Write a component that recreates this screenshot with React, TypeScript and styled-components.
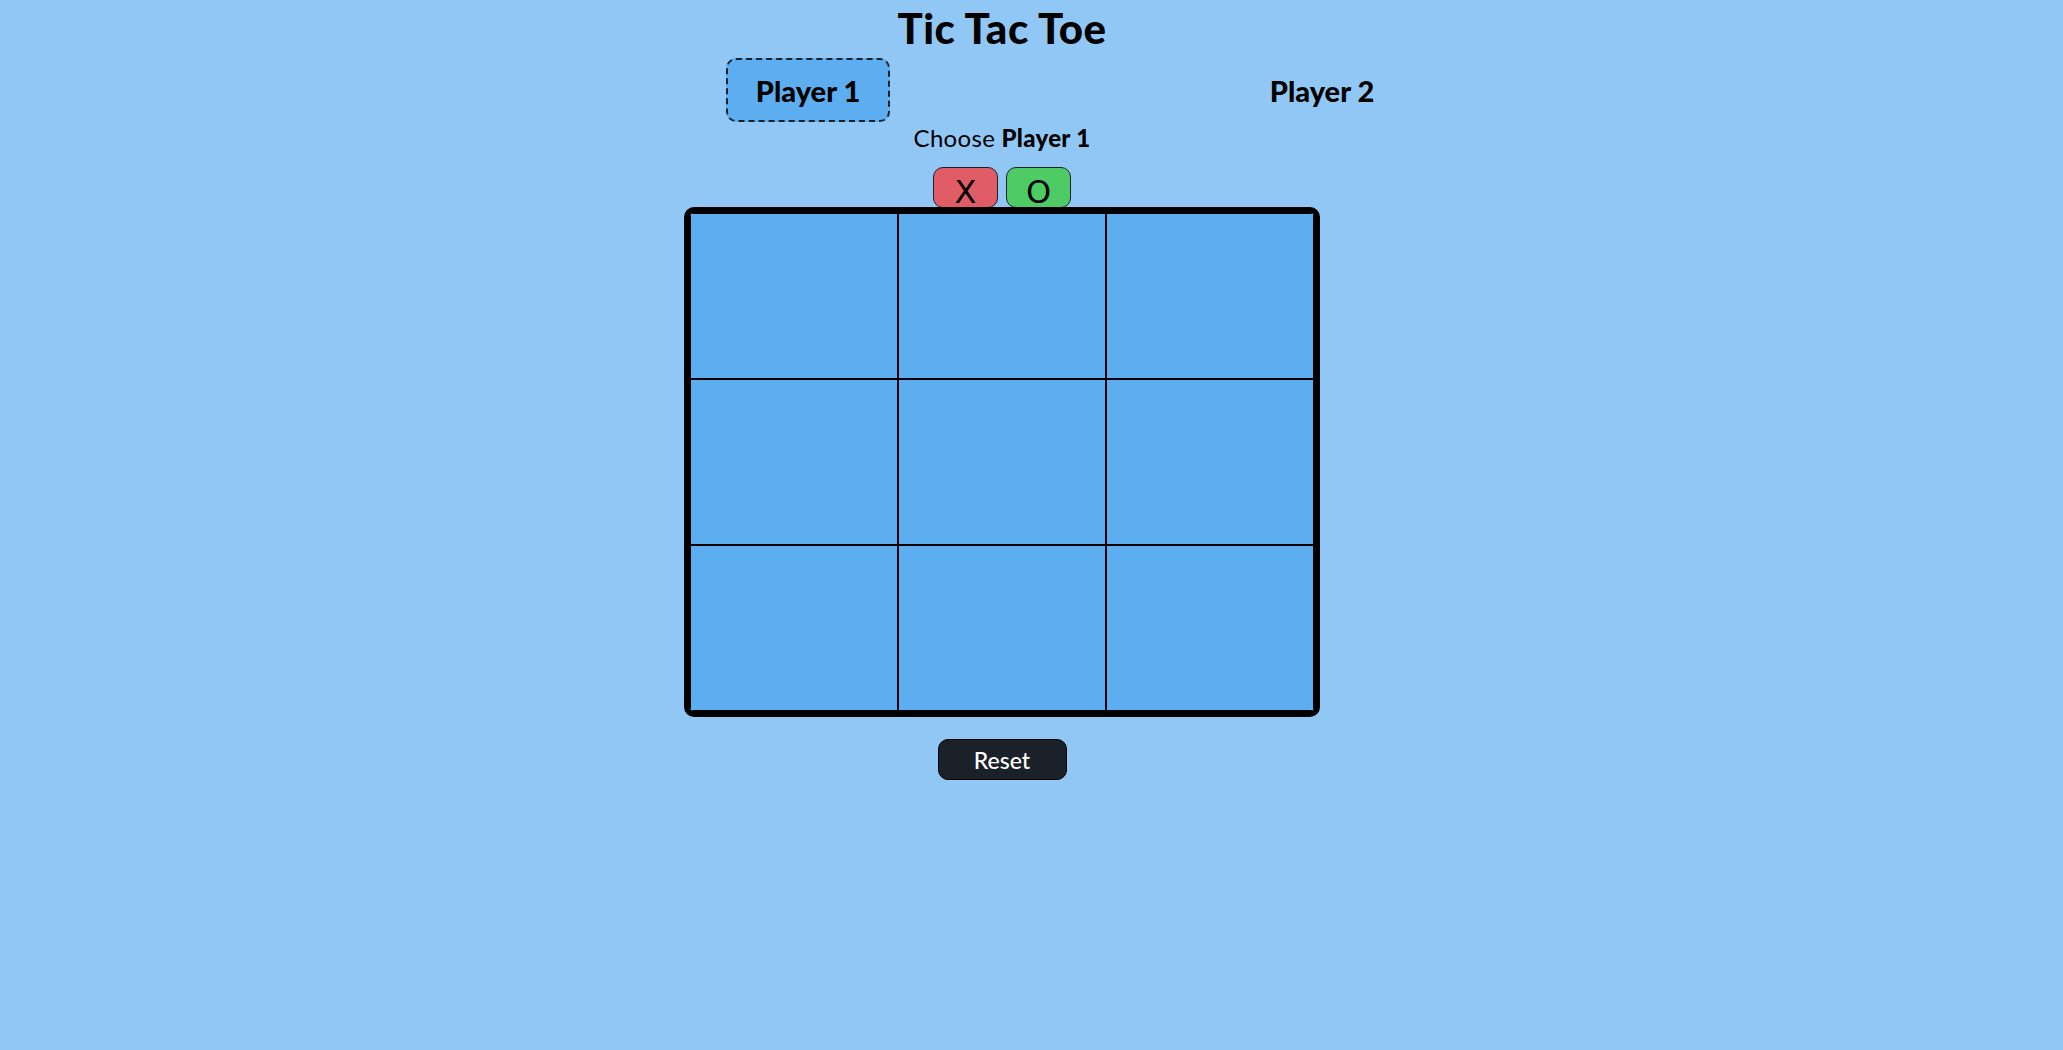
import React, { useState } from "react";
import styled, { createGlobalStyle } from "styled-components";

const GlobalStyle = createGlobalStyle`
  html, body {
    margin: 0;
    padding: 0;
    background: #91c7f5;
    font-family: "Lato", "Open Sans", sans-serif;
    color: #000;
  }
`;

const Page = styled.main`
  display: flex;
  flex-direction: column;
  align-items: center;
  width: calc(100% - 59px);
  min-height: 1050px;
  box-sizing: border-box;
`;

const Title = styled.h1`
  margin: 5px 0 0;
  font-size: 42px;
  line-height: 47px;
  font-weight: 900;
  letter-spacing: 0.5px;
`;

const PlayersRow = styled.div`
  display: flex;
  justify-content: space-between;
  align-items: center;
  width: 678px;
  margin: 6px 0 0 126px;
`;

const PlayerTag = styled.div<{ $active?: boolean }>`
  width: 164px;
  height: 64px;
  box-sizing: border-box;
  display: flex;
  align-items: center;
  justify-content: center;
  font-size: 29px;
  font-weight: 900;
  border-radius: 10px;
  border: 2px dashed ${(p) => (p.$active ? "#1b2129" : "transparent")};
  background: ${(p) => (p.$active ? "#5daef0" : "transparent")};
`;

const Prompt = styled.p`
  margin: 1px 0 0;
  font-size: 24px;
  line-height: 30px;
  font-weight: 400;
  letter-spacing: 0.3px;

  strong {
    font-weight: 900;
  }
`;

const ChoiceRow = styled.div`
  display: flex;
  gap: 8px;
  margin-top: 14px;
`;

const ChoiceButton = styled.button<{ $color: string }>`
  width: 65px;
  height: 41px;
  box-sizing: border-box;
  border: 1.5px solid #1b2129;
  border-radius: 10px;
  background: ${(p) => p.$color};
  color: #000;
  font-family: "DejaVu Sans", sans-serif;
  font-size: 32px;
  line-height: 1;
  padding: 8px 0 0;
  cursor: pointer;
  display: flex;
  align-items: center;
  justify-content: center;
`;

const Board = styled.div`
  display: grid;
  grid-template-columns: repeat(3, 208px);
  grid-template-rows: repeat(3, 166px);
  border: 6px solid #000;
  border-radius: 10px;
  overflow: hidden;
  background: #5daef0;
  margin-top: -1px;
`;

const Cell = styled.button`
  box-sizing: border-box;
  border: 1px solid #000;
  background: #5daef0;
  padding: 0;
  margin: 0;
  font-family: "DejaVu Sans", sans-serif;
  font-size: 80px;
  cursor: pointer;
`;

const ResetButton = styled.button`
  margin-top: 22px;
  width: 129px;
  height: 41px;
  box-sizing: border-box;
  border: 1.5px solid #000;
  border-radius: 10px;
  background: #1b2129;
  color: #fff;
  font-family: "Lato", sans-serif;
  font-size: 23px;
  font-weight: 500;
  cursor: pointer;
`;

export default function App() {
  const [cells, setCells] = useState<string[]>(Array(9).fill(""));
  return (
    <>
      <GlobalStyle />
      <Page>
        <Title>Tic Tac Toe</Title>
        <PlayersRow>
          <PlayerTag $active>Player 1</PlayerTag>
          <PlayerTag>Player 2</PlayerTag>
        </PlayersRow>
        <Prompt>
          Choose <strong>Player 1</strong>
        </Prompt>
        <ChoiceRow>
          <ChoiceButton $color="#e05c66">X</ChoiceButton>
          <ChoiceButton $color="#4ecb65">O</ChoiceButton>
        </ChoiceRow>
        <Board>
          {cells.map((c, i) => (
            <Cell key={i}>{c}</Cell>
          ))}
        </Board>
        <ResetButton onClick={() => setCells(Array(9).fill(""))}>Reset</ResetButton>
      </Page>
    </>
  );
}
